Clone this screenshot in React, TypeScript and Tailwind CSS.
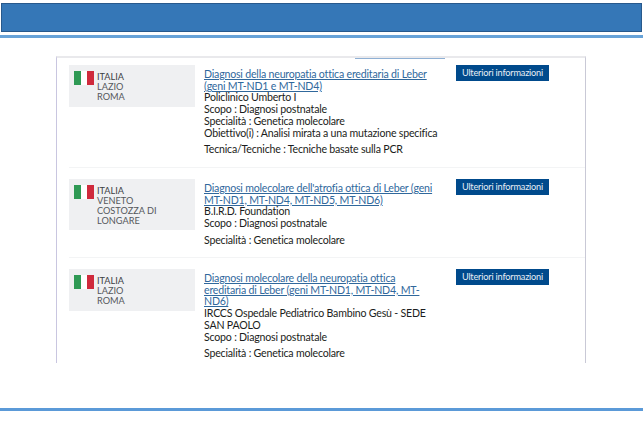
const font = "[font-family:'Lato','Open_Sans',sans-serif]";

function Row({ place, title, org, lines, last, boxH, rowH, divider }: { place: string[]; title: string; org: string[]; lines: string[]; last: string; boxH: string; rowH: string; divider?: boolean }) {
  return (
    <div className={`flex ${rowH} ${divider ? "border-b border-[#f3f4f5]" : ""}`}>
      <div className={`w-[126px] shrink-0 ${boxH} bg-[#eff0f2] flex pl-[5px] pt-[6px]`}>
        <div className="flex w-[20px] h-[14px] shrink-0">
          <div className="flex-1 bg-[#2f9a55]" />
          <div className="flex-1 bg-white" />
          <div className="flex-1 bg-[#cf2a3c]" />
        </div>
        <div className="ml-[3px] pt-[1px] text-[9.2px] leading-[10px] text-[#55585c]">
          <div className="text-[#3c3f44]">ITALIA</div>
          {place.map((p) => <div key={p}>{p}</div>)}
        </div>
      </div>
      <div className="w-[236px] shrink-0 ml-[9px] pt-[4px] text-[10.6px] tracking-[-0.2px] leading-[11.7px] text-[#1b1d20]">
        <div className="w-[232px] text-[#30689c] underline">{title}</div>
        {org.map((o) => <div key={o} className="w-[232px]">{o}</div>)}
        {lines.map((l) => <div key={l}>{l}</div>)}
        <div className="mt-[5px]">{last}</div>
      </div>
      <div className="w-[93px] h-[16px] bg-[#004a8c] ml-[16px] text-[#e8eef5] text-[9.2px] tracking-[-0.2px] leading-[15px] text-center shrink-0">Ulteriori informazioni</div>
    </div>
  );
}

export default function App() {
  return (
    <div className={`w-[643px] h-[428px] bg-white flex flex-col overflow-hidden ${font}`}>
      <div className="mt-[3px] mx-[1px] h-[29px] bg-[#3577b7] border border-[#28598c] shrink-0" />
      <div className="mt-[3px] h-[3px] bg-[#68a3d8] shrink-0" />
      <div className="relative mt-[18px] ml-[56px] w-[530px] h-[307px] shrink-0 border-t-2 border-t-[#e9e9ec] border-l border-r border-l-[#c9c6e0] border-r-[#c9c9d6] overflow-hidden pl-[12px] pt-[7px]">
        <div className="absolute top-0 left-[298px] w-[90px] h-[1px] bg-[#8fb0d4]" />
        <Row rowH="h-[103px]" boxH="h-[42px]" divider
          place={["LAZIO", "ROMA"]}
          title="Diagnosi della neuropatia ottica ereditaria di Leber (geni MT-ND1 e MT-ND4)"
          org={["Policlinico Umberto I"]}
          lines={["Scopo : Diagnosi postnatale", "Specialità : Genetica molecolare", "Obiettivo(i) : Analisi mirata a una mutazione specifica"]}
          last="Tecnica/Tecniche : Tecniche basate sulla PCR" />
        <div className="h-[11px]" />
        <Row rowH="h-[79px]" boxH="h-[51px]" divider
          place={["VENETO", "COSTOZZA DI", "LONGARE"]}
          title="Diagnosi molecolare dell'atrofia ottica di Leber (geni MT-ND1, MT-ND4, MT-ND5, MT-ND6)"
          org={["B.I.R.D. Foundation"]}
          lines={["Scopo : Diagnosi postnatale"]}
          last="Specialità : Genetica molecolare" />
        <div className="h-[11px]" />
        <Row rowH="h-[100px]" boxH="h-[42px]"
          place={["LAZIO", "ROMA"]}
          title="Diagnosi molecolare della neuropatia ottica ereditaria di Leber (geni MT-ND1, MT-ND4, MT-ND6)"
          org={["IRCCS Ospedale Pediatrico Bambino Gesù - SEDE SAN PAOLO"]}
          lines={["Scopo : Diagnosi postnatale"]}
          last="Specialità : Genetica molecolare" />
      </div>
      <div className="mt-[45px] h-[3px] bg-[#5b9ad8] shrink-0" />
    </div>
  );
}
